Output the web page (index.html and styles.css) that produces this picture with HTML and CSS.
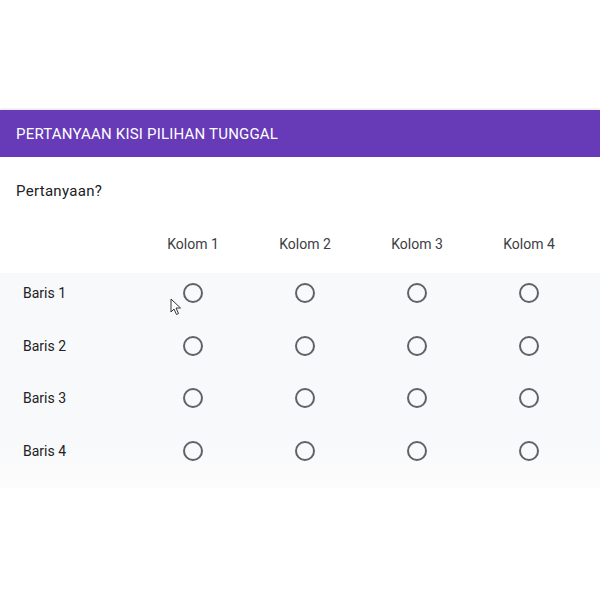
FILE: index.html
```html
<!DOCTYPE html>
<html lang="id">
<head>
<meta charset="utf-8">
<title>Pertanyaan Kisi Pilihan Tunggal</title>
<link rel="stylesheet" href="styles.css">
</head>
<body>
<div class="page">
  <div class="top-space"></div>
  <div class="header">PERTANYAAN KISI PILIHAN TUNGGAL</div>
  <div class="question">Pertanyaan?</div>
  <div class="grid-head">
    <div class="label-cell"></div>
    <div class="col-label">Kolom 1</div>
    <div class="col-label">Kolom 2</div>
    <div class="col-label">Kolom 3</div>
    <div class="col-label">Kolom 4</div>
  </div>
  <div class="grid-body">
    <div class="grid-row">
      <div class="label-cell">Baris 1</div>
      <div class="cell"><span class="radio"></span></div>
      <div class="cell"><span class="radio"></span></div>
      <div class="cell"><span class="radio"></span></div>
      <div class="cell"><span class="radio"></span></div>
    </div>
    <div class="grid-row">
      <div class="label-cell">Baris 2</div>
      <div class="cell"><span class="radio"></span></div>
      <div class="cell"><span class="radio"></span></div>
      <div class="cell"><span class="radio"></span></div>
      <div class="cell"><span class="radio"></span></div>
    </div>
    <div class="grid-row">
      <div class="label-cell">Baris 3</div>
      <div class="cell"><span class="radio"></span></div>
      <div class="cell"><span class="radio"></span></div>
      <div class="cell"><span class="radio"></span></div>
      <div class="cell"><span class="radio"></span></div>
    </div>
    <div class="grid-row">
      <div class="label-cell">Baris 4</div>
      <div class="cell"><span class="radio"></span></div>
      <div class="cell"><span class="radio"></span></div>
      <div class="cell"><span class="radio"></span></div>
      <div class="cell"><span class="radio"></span></div>
    </div>
  </div>
  <svg class="cursor" width="12" height="18" viewBox="0 0 12 18"><path d="M1 1 L1 14 L4 11 L6.5 16.5 L8.5 15.5 L6 10 L10.5 10 Z" fill="#fff" stroke="#333" stroke-width="1" stroke-linejoin="round"/></svg>
</div>
</body>
</html>
```
FILE: styles.css
```css
html, body {
  margin: 0;
  padding: 0;
  background: #ffffff;
}
.page {
  position: relative;
  width: 600px;
  height: 600px;
  overflow: hidden;
  font-family: Roboto, "Liberation Sans", sans-serif;
  color: #202124;
}
.top-space {
  height: 110px;
}
.header {
  height: 47px;
  background: #673ab7;
  color: #ffffff;
  font-size: 15px;
  letter-spacing: 0.2px;
  padding-left: 16px;
  display: flex;
  align-items: center;
  box-shadow: 0 -1px 2px rgba(0, 0, 0, 0.12);
}
.question {
  padding: 24px 16px 0;
  font-size: 15px;
  letter-spacing: 0.3px;
  line-height: 20px;
  height: 20px;
}
.grid-head {
  display: grid;
  grid-template-columns: 137px repeat(4, 112px);
  height: 72px;
  box-sizing: border-box;
  padding-top: 33px;
  font-size: 14px;
  line-height: 20px;
}
.col-label {
  text-align: center;
  color: #3c4043;
}
.grid-body {
  background: linear-gradient(#f8f9fa 0, #f8f9fa 80%, #fcfcfd 100%);
  height: 215px;
}
.grid-row {
  display: grid;
  grid-template-columns: 137px repeat(4, 112px);
  height: 52.5px;
  box-sizing: border-box;
  padding-top: 10px;
  font-size: 14px;
  line-height: 20px;
}
.label-cell {
  padding-left: 23px;
}
.cell {
  display: flex;
  justify-content: center;
  align-items: center;
  height: 20px;
}
.radio {
  width: 16px;
  height: 16px;
  border: 2px solid #5f6368;
  border-radius: 50%;
}
.cursor {
  position: absolute;
  left: 170px;
  top: 298px;
}
```
